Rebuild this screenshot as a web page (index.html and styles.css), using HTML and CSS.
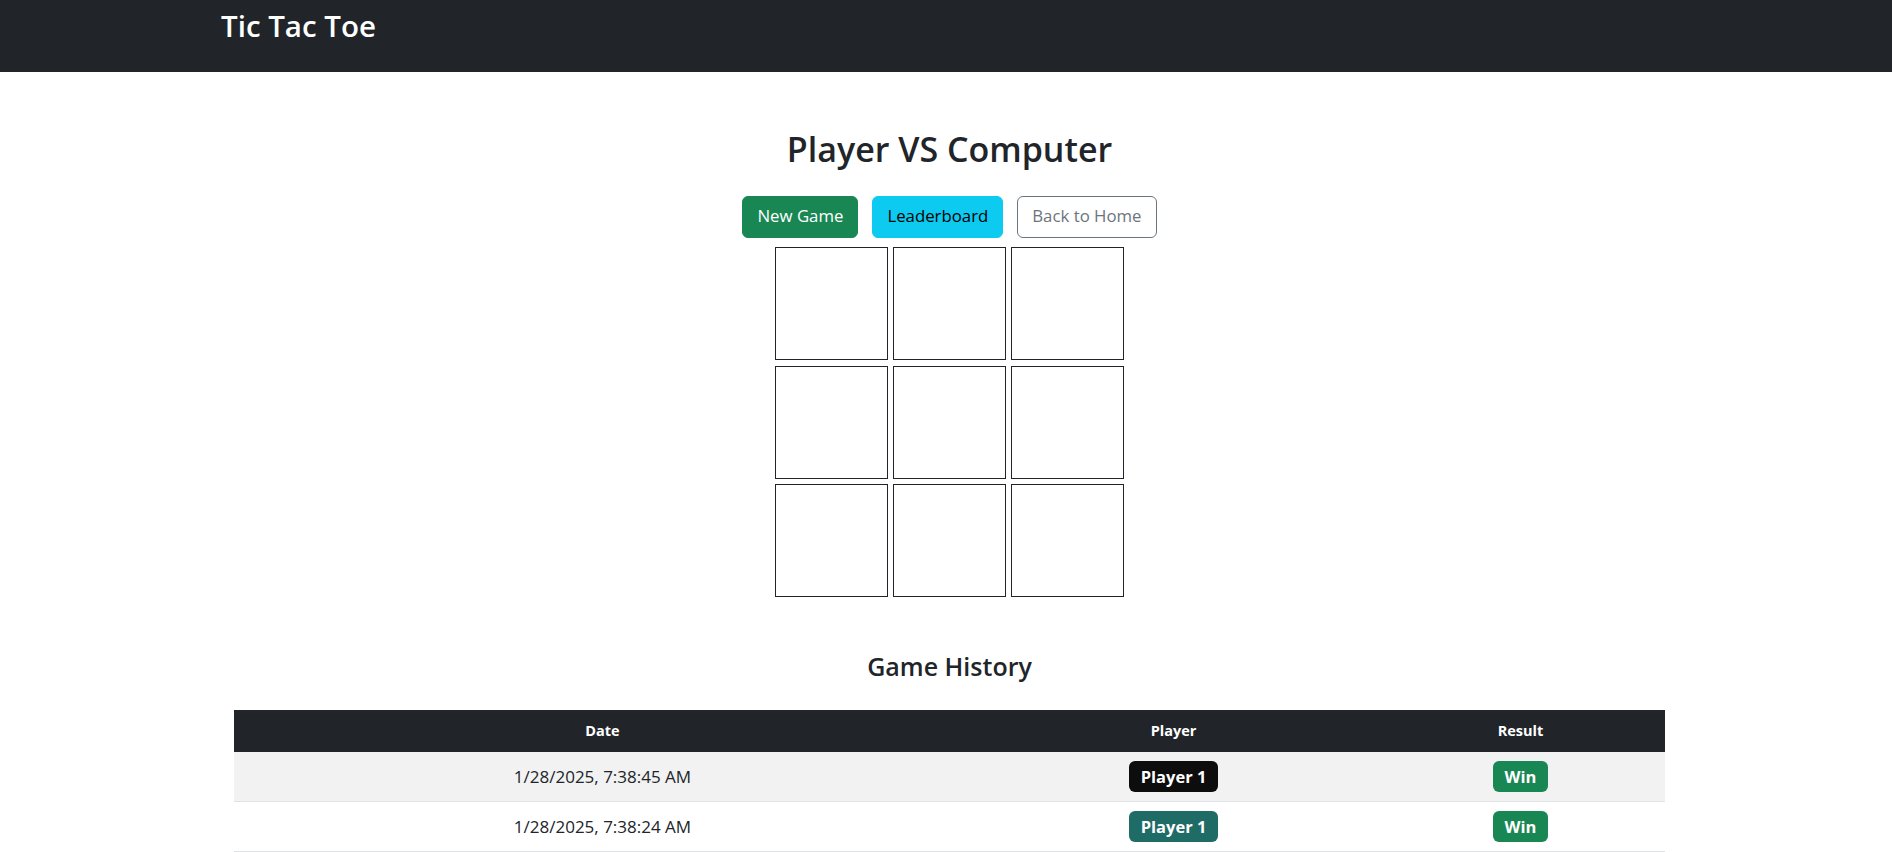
FILE: index.html
```html
<!DOCTYPE html>
<html lang="en">
<head>
<meta charset="utf-8">
<title>Tic Tac Toe</title>
<link rel="stylesheet" href="styles.css">
</head>
<body>
<nav class="navbar">
  <span class="brand">Tic Tac Toe</span>
</nav>
<main class="main">
  <h1 class="title">Player VS Computer</h1>
  <div class="actions">
    <button class="btn btn-success">New Game</button>
    <button class="btn btn-info">Leaderboard</button>
    <button class="btn btn-outline">Back to Home</button>
  </div>
  <div class="board">
    <div class="cell"></div><div class="cell"></div><div class="cell"></div>
    <div class="cell"></div><div class="cell"></div><div class="cell"></div>
    <div class="cell"></div><div class="cell"></div><div class="cell"></div>
  </div>
  <h2 class="history-title">Game History</h2>
  <table class="history">
    <colgroup>
      <col class="col-date">
      <col class="col-player">
      <col class="col-result">
    </colgroup>
    <thead>
      <tr><th>Date</th><th>Player</th><th>Result</th></tr>
    </thead>
    <tbody>
      <tr class="striped">
        <td>1/28/2025, 7:38:45 AM</td>
        <td><span class="badge badge-black">Player 1</span></td>
        <td><span class="badge badge-win">Win</span></td>
      </tr>
      <tr>
        <td>1/28/2025, 7:38:24 AM</td>
        <td><span class="badge badge-teal">Player 1</span></td>
        <td><span class="badge badge-win">Win</span></td>
      </tr>
    </tbody>
  </table>
</main>
</body>
</html>
```
FILE: styles.css
```css
* { box-sizing: border-box; }
html, body { margin: 0; padding: 0; }
body {
  font-family: "Open Sans", "Noto Sans", "Liberation Sans", sans-serif;
  color: #212529;
  background: #fff;
}
.navbar {
  background: #212529;
  height: 72px;
  padding-left: 221px;
  display: flex;
  align-items: flex-start;
}
.brand {
  color: #fff;
  font-size: 29.5px;
  font-weight: 600;
  line-height: 1;
  margin-top: 11px;
}
.main {
  padding-left: 7px;
  display: flex;
  flex-direction: column;
  align-items: center;
}
.title {
  margin: 53px 0 0;
  font-size: 34px;
  font-weight: 600;
  line-height: 48px;
}
.actions {
  display: flex;
  gap: 14px;
  margin-top: 23px;
}
.btn {
  font-family: inherit;
  font-size: 16.8px;
  height: 41.5px;
  padding: 0 14px;
  border-radius: 6px;
  border: 1px solid transparent;
  line-height: 1;
}
.btn-success { background: #198754; border-color: #198754; color: #fff; }
.btn-info { background: #0dcaf0; border-color: #0dcaf0; color: #000; }
.btn-outline { background: #fff; border-color: #6c757d; color: #6c757d; }
.board {
  display: grid;
  grid-template-columns: repeat(3, 113px);
  grid-auto-rows: 113px;
  column-gap: 5px;
  row-gap: 5.5px;
  margin-top: 9.5px;
}
.cell {
  border: 1px solid #212529;
  background: #fff;
}
.history-title {
  margin: 51px 0 0;
  font-size: 25px;
  font-weight: 600;
  line-height: 36px;
}
.history {
  width: 1431px;
  table-layout: fixed;
  border-collapse: collapse;
  margin-top: 25.5px;
}
.col-date { width: 737px; }
.col-player { width: 405px; }
.col-result { width: 289px; }
.history th {
  background: #212529;
  color: #fff;
  font-size: 14.5px;
  font-weight: 700;
  height: 42.5px;
  padding: 0;
  text-align: center;
}
.history td {
  height: 49.5px;
  padding: 0;
  text-align: center;
  font-size: 17px;
  border-bottom: 1px solid #dee2e6;
}
.history tr.striped td { background: #f2f2f2; }
.badge {
  display: inline-block;
  vertical-align: middle;
  font-size: 16.5px;
  font-weight: 700;
  color: #fff;
  padding: 0 12px;
  height: 31px;
  line-height: 31px;
  border-radius: 6px;
}
.badge-black { background: #0d0d0d; }
.badge-teal { background: #1f6b66; }
.badge-win { background: #198754; }
```
